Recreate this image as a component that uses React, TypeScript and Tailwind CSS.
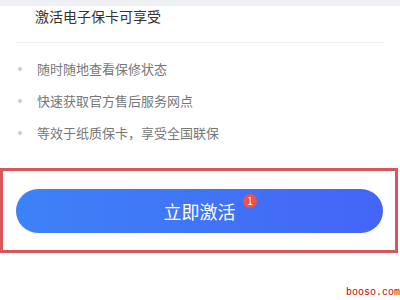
import React from "react";

export default function App() {
  const items = ["随时随地查看保修状态", "快速获取官方售后服务网点", "等效于纸质保卡，享受全国联保"];
  return (
    <div
      className="relative w-[400px] h-[300px] overflow-hidden bg-white"
      style={{ fontFamily: '"Noto Sans CJK SC", "Noto Sans", sans-serif' }}
    >
      <div className="h-[6px] bg-[#eef0f4]" />
      <div className="h-[20px] pl-[35px] text-[14px] leading-[20px] text-[#333333]">激活电子保卡可享受</div>
      <div className="mx-[16px] mt-[16px] h-px bg-[#eeeeee]" />
      <div className="pt-[10px]">
        {items.map((t) => (
          <div key={t} className="flex h-[32px] items-center pl-[18px]">
            <div className="h-[4px] w-[4px] rounded-full bg-[#cccccc]" />
            <div className="ml-[15px] text-[13px] leading-[20px] text-[#777777]">{t}</div>
          </div>
        ))}
      </div>
      <div className="mt-[19px] h-[85px] w-[398px] border-[3px] border-[#d9565c] pl-[13px] pt-[18px]">
        <div className="relative flex h-[44px] w-[367px] items-center justify-center rounded-full bg-gradient-to-r from-[#3d82f7] to-[#4465f6]">
          <span className="text-[18px] leading-[24px] text-white">立即激活</span>
          <div className="absolute left-[227px] top-[5px] flex h-[14px] w-[14px] items-center justify-center rounded-full bg-[#f0514a] text-[10px] leading-none text-white">
            1
          </div>
        </div>
      </div>
      <div
        className="absolute bottom-[1px] right-0 text-[10px] leading-[12px] text-[#cc0000]"
        style={{ fontFamily: '"Liberation Mono", monospace' }}
      >
        booso.com
      </div>
    </div>
  );
}
